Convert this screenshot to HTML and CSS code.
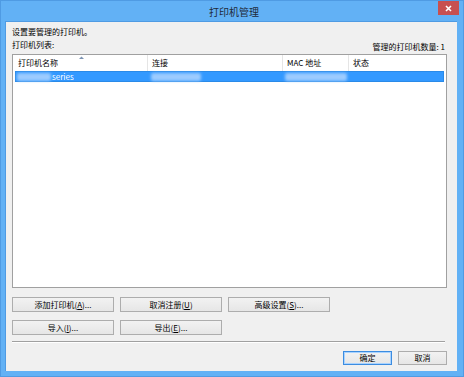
FILE: index.html
```html
<!DOCTYPE html>
<html lang="zh-CN">
<head>
<meta charset="utf-8">
<title>打印机管理</title>
<link rel="stylesheet" href="styles.css">
</head>
<body>
<div class="window">
  <div class="titlebar">
    <span class="title">打印机管理</span>
    <span class="close">
      <svg width="7" height="7" viewBox="0 0 7 7"><path d="M1 1L6 6M6 1L1 6" stroke="#fff" stroke-width="1.6"/></svg>
    </span>
  </div>
  <div class="panel">
    <div class="line1">设置要管理的打印机。</div>
    <div class="line2">
      <span>打印机列表:</span>
      <span class="count">管理的打印机数量: 1</span>
    </div>
    <div class="list">
      <div class="header">
        <div class="col c1">打印机名称
          <svg class="sort" width="5" height="3" viewBox="0 0 5 3"><path d="M0 3L2.5 0.5L5 3Z" fill="#7d93b2"/></svg>
        </div>
        <div class="col c2">连接</div>
        <div class="col c3">MAC 地址</div>
        <div class="col c4">状态</div>
      </div>
      <div class="row selected">
        <div class="cell c1"><span class="blur b1"></span>series</div>
        <div class="cell c2"><span class="blur b2"></span></div>
        <div class="cell c3"><span class="blur b3"></span></div>
        <div class="cell c4"></div>
      </div>
    </div>
    <div class="btnrow r1">
      <button class="btn">添加打印机(<u>A</u>)...</button>
      <button class="btn">取消注册(<u>U</u>)</button>
      <button class="btn">高级设置(<u>S</u>)...</button>
    </div>
    <div class="btnrow r2">
      <button class="btn">导入(<u>I</u>)...</button>
      <button class="btn">导出(<u>E</u>)...</button>
    </div>
    <div class="sep"></div>
    <div class="okrow">
      <button class="btn small default">确定</button>
      <button class="btn small">取消</button>
    </div>
  </div>
</div>
</body>
</html>
```
FILE: styles.css
```css
* { box-sizing: border-box; }
html, body { margin: 0; padding: 0; }
body {
  width: 464px;
  height: 377px;
  overflow: hidden;
  font-family: "Noto Sans CJK SC", "Noto Sans", sans-serif;
  font-size: 8px;
  color: #000;
}
.window {
  width: 464px;
  height: 377px;
  background: #62b1f5;
  border: 1px solid #4f9be3;
  display: flex;
  flex-direction: column;
}
.titlebar {
  height: 20px;
  position: relative;
  display: flex;
  justify-content: center;
  align-items: center;
}
.title {
  font-size: 10px;
  color: #1e2a3a;
  padding-top: 1px;
  padding-left: 4px;
}
.close {
  position: absolute;
  right: 4px;
  top: 0;
  width: 21px;
  height: 14px;
  background: #c75050;
  display: flex;
  align-items: center;
  justify-content: center;
}
.panel {
  margin: 0 6px 5px 4px;
  flex: 1;
  background: #f0f0f0;
  border: 1px solid #4f9be3;
  border-width: 1px 0 0 1px;
  padding: 3px 10px 0 6px;
  display: flex;
  flex-direction: column;
}
.line1 { height: 13px; line-height: 13px; }
.line2 {
  height: 16px;
  line-height: 13px;
  display: flex;
  justify-content: space-between;
}
.count { padding-top: 2px; padding-right: 2px; }
.list {
  height: 234px;
  background: #fff;
  border: 1px solid #a0a0a0;
  padding: 0 1px;
}
.header {
  display: flex;
  height: 16px;
  line-height: 16px;
}
.col {
  border-right: 1px solid #e5e5e5;
  padding-left: 4px;
  position: relative;
}
.c1 { width: 134px; }
.c2 { width: 135px; }
.c3 { width: 66px; }
.c4 { flex: 1; border-right: none; }
.sort { position: absolute; left: 65px; top: 1px; }
.row {
  display: flex;
  height: 11px;
  line-height: 11px;
  margin: 0 1px;
}
.selected {
  background: #3399ff;
  color: #fff;
  border: 1px solid #2a8ae8;
}
.row .cell { display: flex; align-items: center; padding-left: 1px; }
.row .c1 { width: 133px; }
.row .c2 { padding-left: 2px; }
.blur {
  display: inline-block;
  height: 8px;
  background: #9ccbff;
  filter: blur(1.5px);
  border-radius: 2px;
}
.b1 { width: 34px; margin-right: 1px; }
.b2 { width: 50px; }
.b3 { width: 62px; }
.btnrow {
  display: flex;
  gap: 6px;
}
.r1 { margin-top: 9px; }
.r2 { margin-top: 8px; }
.btn {
  width: 102px;
  height: 15px;
  padding: 0;
  margin: 0;
  font-family: inherit;
  font-size: 8px;
  line-height: 13px;
  color: #000;
  background: linear-gradient(#f2f2f2, #e6e6e6);
  border: 1px solid #adadad;
  border-radius: 0;
}
.btn u { text-decoration: underline; }
.sep {
  margin-top: 6px;
  height: 2px;
  border-top: 1px solid #a0a0a0;
  border-bottom: 1px solid #fff;
  margin-right: 2px;
}
.okrow {
  margin-top: 8px;
  display: flex;
  justify-content: flex-end;
  gap: 6px;
}
.btn.small { width: 49px; height: 14px; line-height: 12px; }
.btn.default {
  border-color: #3c8ce0;
  box-shadow: inset 0 0 0 1px #a9d3ff;
}
```
